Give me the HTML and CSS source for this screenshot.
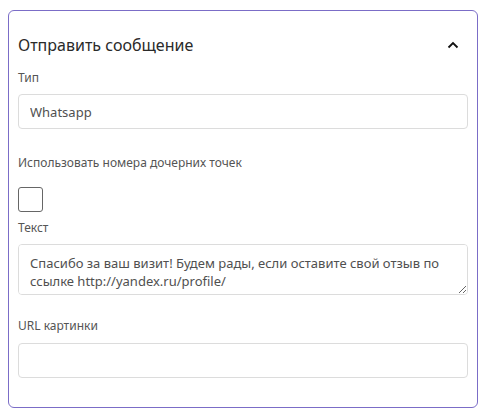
FILE: index.html
```html
<!DOCTYPE html>
<html lang="ru">
<head>
    <meta charset="UTF-8">
    <meta name="viewport" content="width=device-width, initial-scale=1.0">
    <title>Отправить сообщение</title>
    <link rel="stylesheet" href="styles.css">
</head>
<body>
    <div class="step-card">
        <div class="step-header">
            <h2>Отправить сообщение</h2>
            <button class="collapse-btn" aria-label="Свернуть">
                <svg width="12" height="8" viewBox="0 0 12 8">
                    <path d="M1.5 6.5 L6 2 L10.5 6.5" fill="none" stroke="#111" stroke-width="1.8"/>
                </svg>
            </button>
        </div>

        <div class="field">
            <label class="field-label">Тип</label>
            <input class="field-input" type="text" value="Whatsapp">
        </div>

        <div class="field field-check">
            <label class="field-label">Использовать номера дочерних точек</label>
            <div class="checkbox"></div>
        </div>

        <div class="field">
            <label class="field-label">Текст</label>
            <textarea class="field-input field-textarea" rows="2">Спасибо за ваш визит! Будем рады, если оставите свой отзыв по ссылке http://yandex.ru/profile/</textarea>
        </div>

        <div class="field field-url">
            <label class="field-label">URL картинки</label>
            <input class="field-input" type="text" value="">
        </div>
    </div>
</body>
</html>
```

FILE: styles.css
```css
* {
    margin: 0;
    padding: 0;
    box-sizing: border-box;
}

body {
    font-family: 'Noto Sans', sans-serif;
    background: white;
    padding: 10px 5px 8px 8px;
}

.step-card {
    height: 398px;
    border: 1px solid #7b6dc7;
    border-radius: 6px;
    padding: 22px 9px 0 9px;
}

.step-header {
    display: flex;
    justify-content: space-between;
    align-items: center;
    height: 24px;
    margin-bottom: 12px;
}

.step-header h2 {
    font-size: 16px;
    font-weight: 400;
    color: #2a2a2a;
}

.collapse-btn {
    background: none;
    border: none;
    width: 20px;
    height: 20px;
    display: flex;
    align-items: center;
    justify-content: center;
    margin-right: 5px;
    cursor: pointer;
}

.field {
    display: flex;
    flex-direction: column;
}

.field-label {
    font-size: 12px;
    color: #555;
    line-height: 18px;
    margin-bottom: 7px;
}

.field-input {
    width: 100%;
    height: 35px;
    border: 1px solid #dcdcdc;
    border-radius: 4px;
    padding: 0 11px;
    font-family: inherit;
    font-size: 13px;
    color: #505050;
    outline: none;
}

.field-check {
    margin-top: 25px;
}

.field-check .field-label {
    margin-bottom: 15px;
}

.checkbox {
    width: 25px;
    height: 25px;
    border: 1px solid #666;
    border-radius: 3px;
    margin-bottom: 7px;
}

.field-textarea {
    height: 51px;
    padding: 9px 11px 5px;
    line-height: 18px;
    resize: vertical;
}

.field-url {
    margin-top: 22px;
}

.field-url .field-label {
    margin-bottom: 8px;
}
```
